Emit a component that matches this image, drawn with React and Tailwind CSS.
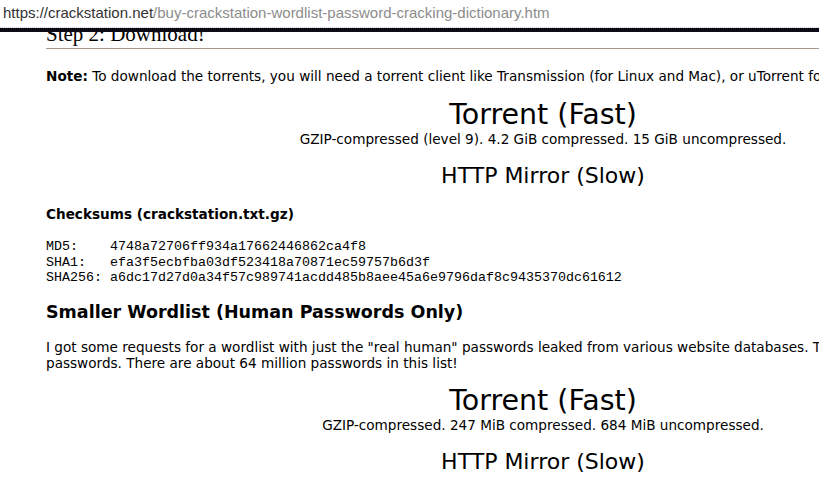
import React from "react";

const verdana = { fontFamily: '"DejaVu Sans", Verdana, sans-serif' };

const Download = ({ title, info }) => (
  <div className="text-center">
    <div className="text-[28.5px] leading-[32px] pt-[15px]">{title}</div>
    <div className="text-[13.6px] leading-[16px]">{info}</div>
    <div className="text-[22px] leading-[26px] mt-[16px]">HTTP Mirror (Slow)</div>
  </div>
);

export default function App() {
  return (
    <div className="w-[819px] h-[483px] overflow-hidden bg-white flex flex-col">
      <div className="h-[28px] shrink-0 flex items-center px-[3px] text-[15px] font-['Liberation_Sans',Arial,sans-serif] border-b border-dotted border-[#c9c9c9] whitespace-nowrap">
        <span className="text-[#333]">https://crackstation.net</span>
        <span className="text-[#8c8c8c]">/buy-crackstation-wordlist-password-cracking-dictionary.htm</span>
      </div>
      <div className="h-[4px] shrink-0 bg-[#0b0b16]" />
      <div className="flex-1 overflow-hidden">
        <div className="ml-[46px] w-[994px] text-black" style={verdana}>
          <h2 className="mt-[-10px] pb-[2px] text-[21px] leading-[24px] font-['Liberation_Serif','Times_New_Roman',serif] border-b border-[#a89b8c]">
            Step 2: Download!
          </h2>
          <p className="mt-[19px] text-[13.6px] leading-[16px] whitespace-nowrap">
            <b>Note:</b> To download the torrents, you will need a torrent client like Transmission (for Linux and Mac), or uTorrent for Windows.
          </p>
          <Download
            title="Torrent (Fast)"
            info="GZIP-compressed (level 9). 4.2 GiB compressed. 15 GiB uncompressed."
          />
          <h3 className="mt-[17px] text-[13.6px] leading-[16px] font-bold">Checksums (crackstation.txt.gz)</h3>
          <pre className="mt-[17px] text-[13.33px] leading-[15.5px] font-['Liberation_Mono','Courier_New',monospace]">
{`MD5:    4748a72706ff934a17662446862ca4f8
SHA1:   efa3f5ecbfba03df523418a70871ec59757b6d3f
SHA256: a6dc17d27d0a34f57c989741acdd485b8aee45a6e9796daf8c9435370dc61612`}
          </pre>
          <h2 className="mt-[15px] text-[17.5px] leading-[22px] font-bold">Smaller Wordlist (Human Passwords Only)</h2>
          <p className="mt-[16px] text-[13.6px] leading-[16px]">
            <span className="whitespace-nowrap">I got some requests for a wordlist with just the "real human" passwords leaked from various website databases. This file contains just those</span>
            <br />
            <span className="whitespace-nowrap">passwords. There are about 64 million passwords in this list!</span>
          </p>
          <div className="mt-[-1px]">
            <Download
              title="Torrent (Fast)"
              info="GZIP-compressed. 247 MiB compressed. 684 MiB uncompressed."
            />
          </div>
        </div>
      </div>
    </div>
  );
}
